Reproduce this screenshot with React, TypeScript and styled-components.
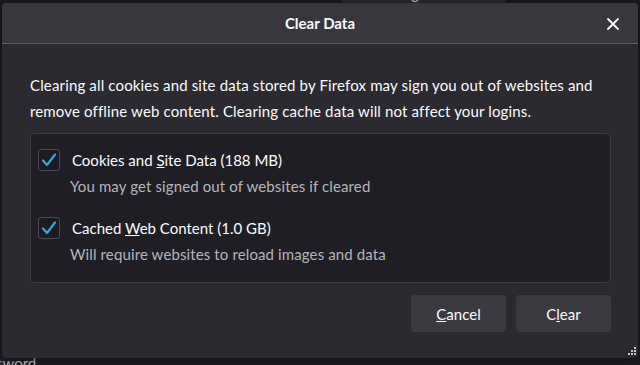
import React from "react";
import styled, { createGlobalStyle } from "styled-components";

const GlobalStyle = createGlobalStyle`
    html, body {
        margin: 0;
        padding: 0;
        background: #1c1b22;
    }
    body {
        font-family: "Lato", "Liberation Sans", sans-serif;
        color: #fbfbfe;
    }
`;

const Page = styled.div`
    position: relative;
    width: 640px;
    height: 365px;
    overflow: hidden;
    background: #1c1b22;
`;

// what sits behind the dialog in the preferences page
const BackButton = styled.div`
    position: absolute;
    top: -28px;
    left: 341px;
    width: 165px;
    height: 31px;
    background: #2b2a33;
    border-radius: 4px;
    display: flex;
    align-items: flex-end;
    justify-content: center;
    font-size: 15px;
    color: #c9c9cf;
    line-height: 1;
    padding-bottom: 2px;
    box-sizing: border-box;
`;

const BackText = styled.div`
    position: absolute;
    left: -4px;
    top: 354px;
    font-size: 15px;
    color: #a9a9b0;
`;

const Dialog = styled.div`
    position: absolute;
    top: 3px;
    left: 2px;
    width: 636px;
    height: 355px;
    background: #2b2a31;
    border-radius: 4px;
    overflow: hidden;
    display: flex;
    flex-direction: column;
    box-shadow: 0 0 6px rgba(0, 0, 0, 0.5);
`;

const Header = styled.header`
    height: 40px;
    flex: none;
    background: #38373d;
    border-bottom: 1px solid #5d5c64;
    display: flex;
    align-items: center;
    justify-content: center;
    position: relative;
`;

const Title = styled.h1`
    margin: 0;
    font-size: 15px;
    font-weight: 700;
    color: #fbfbfe;
`;

const CloseButton = styled.button`
    position: absolute;
    right: 16px;
    top: 12px;
    width: 18px;
    height: 18px;
    padding: 0;
    border: none;
    background: none;
    display: flex;
    align-items: center;
    justify-content: center;
`;

const Body = styled.div`
    flex: 1;
    display: flex;
    flex-direction: column;
    padding: 28px 27px 0 28px;
`;

const Intro = styled.p`
    margin: 0;
    font-size: 15px;
    line-height: 26px;
    letter-spacing: 0.15px;
    color: #fbfbfe;
`;

const OptionsBox = styled.div`
    margin-top: 9px;
    height: 150px;
    box-sizing: border-box;
    background: #1f1e25;
    border: 1px solid #3d3c43;
    border-radius: 4px;
    padding: 15px 7px 0 7px;
    display: flex;
    flex-direction: column;
    gap: 20px;
`;

const Option = styled.div`
    display: flex;
    flex-direction: column;
`;

const OptionRow = styled.label`
    display: flex;
    align-items: center;
    gap: 12px;
    height: 22px;
`;

const Box = styled.span`
    width: 20px;
    height: 20px;
    flex: none;
    border: 1px solid #4c4b53;
    border-radius: 3px;
    background: #1c1b22;
    display: flex;
    align-items: center;
    justify-content: center;
`;

const OptionLabel = styled.span`
    font-size: 15px;
    color: #fbfbfe;
`;

const OptionHint = styled.span`
    margin-left: 32px;
    margin-top: 4px;
    font-size: 15px;
    line-height: 22px;
    letter-spacing: 0.12px;
    color: #b6b5bb;
`;

const Footer = styled.div`
    margin-top: 12px;
    display: flex;
    justify-content: flex-end;
    gap: 10px;
`;

const Button = styled.button`
    width: 95px;
    height: 37px;
    border: none;
    border-radius: 4px;
    background: #3b3a41;
    color: #fbfbfe;
    font-family: "Lato", "Liberation Sans", sans-serif;
    font-size: 15px;
`;

const Grip = styled.svg`
    position: absolute;
    right: 1px;
    bottom: 2px;
`;

const Check = () => (
    <svg width="16" height="14" viewBox="0 0 16 14">
        <polyline points="2,7.5 6,12 14,1.5" fill="none" stroke="#3aa3dc" strokeWidth="2.2" strokeLinecap="round" strokeLinejoin="round" />
    </svg>
);

interface OptionProps {
    before: string;
    accessKey: string;
    after: string;
    hint: string;
}

const ClearOption: React.FC<OptionProps> = ({ before, accessKey, after, hint }) => (
    <Option>
        <OptionRow>
            <Box>
                <Check />
            </Box>
            <OptionLabel>
                {before}
                <u>{accessKey}</u>
                {after}
            </OptionLabel>
        </OptionRow>
        <OptionHint>{hint}</OptionHint>
    </Option>
);

const App: React.FC = () => {
    return (
        <Page>
            <GlobalStyle />
            <BackButton>Manage Data…</BackButton>
            <BackText>sword</BackText>
            <Dialog>
                <Header>
                    <Title>Clear Data</Title>
                    <CloseButton>
                        <svg width="14" height="14" viewBox="0 0 14 14">
                            <path d="M2 2 L12 12 M12 2 L2 12" stroke="#fbfbfe" strokeWidth="1.8" strokeLinecap="round" />
                        </svg>
                    </CloseButton>
                </Header>
                <Body>
                    <Intro>
                        Clearing all cookies and site data stored by Firefox may sign you out of websites and remove
                        offline web content. Clearing cache data will not affect your logins.
                    </Intro>
                    <OptionsBox>
                        <ClearOption
                            before="Cookies and "
                            accessKey="S"
                            after="ite Data (188 MB)"
                            hint="You may get signed out of websites if cleared"
                        />
                        <ClearOption
                            before="Cached "
                            accessKey="W"
                            after="eb Content (1.0 GB)"
                            hint="Will require websites to reload images and data"
                        />
                    </OptionsBox>
                    <Footer>
                        <Button>
                            <u>C</u>ancel
                        </Button>
                        <Button>
                            C<u>l</u>ear
                        </Button>
                    </Footer>
                </Body>
                <Grip width="10" height="10" viewBox="0 0 10 10">
                    <rect x="7" y="1" width="2" height="2" fill="#c9c9cf" />
                    <rect x="4" y="4" width="2" height="2" fill="#c9c9cf" />
                    <rect x="7" y="4" width="2" height="2" fill="#c9c9cf" />
                    <rect x="1" y="7" width="2" height="2" fill="#c9c9cf" />
                    <rect x="4" y="7" width="2" height="2" fill="#c9c9cf" />
                    <rect x="7" y="7" width="2" height="2" fill="#c9c9cf" />
                </Grip>
            </Dialog>
        </Page>
    );
};

export default App;
